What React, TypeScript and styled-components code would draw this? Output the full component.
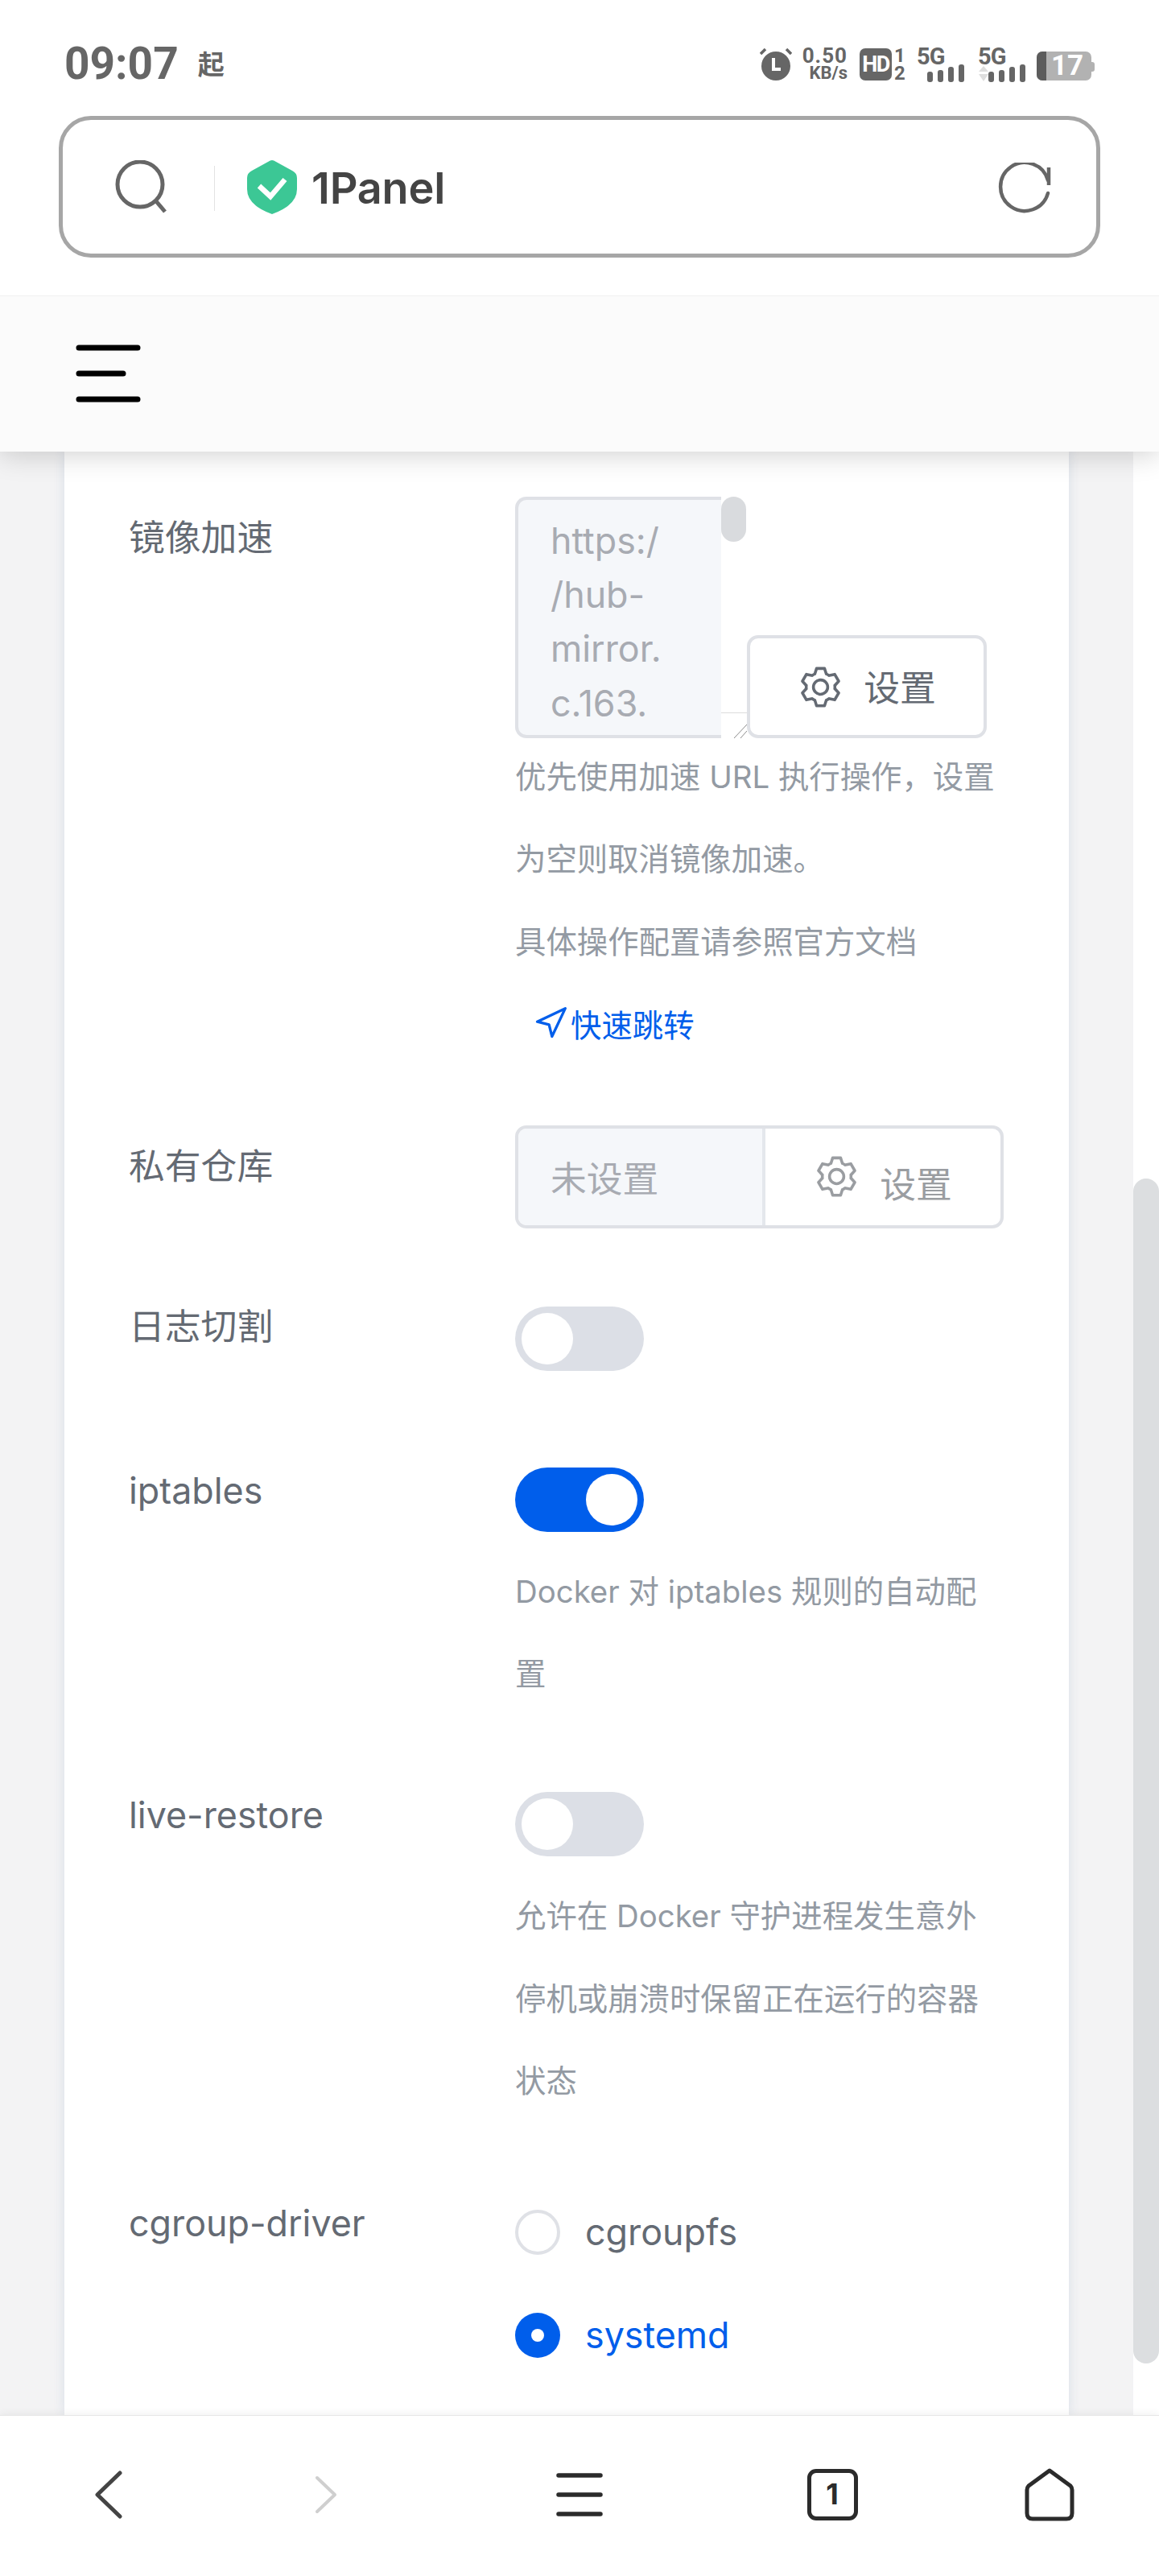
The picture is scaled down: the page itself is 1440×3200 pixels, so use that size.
import React from "react";
import styled, { createGlobalStyle } from "styled-components";
import { Navigation } from "lucide-react";

const Global = createGlobalStyle`
  html, body { margin: 0; padding: 0; background: #fff; }
  * { box-sizing: border-box; }
  body { font-family: Inter, "Noto Sans CJK SC", sans-serif; }
`;

const Page = styled.div`
  width: 1440px;
  height: 3200px;
  display: flex;
  flex-direction: column;
  overflow: hidden;
  background: #fff;
`;

const StatusBar = styled.div`
  height: 144px;
  padding: 60px 84px 0 80px;
  display: flex;
  justify-content: space-between;
  align-items: flex-start;
  color: #666;
  font-family: Roboto, "Noto Sans CJK SC", sans-serif;
  font-weight: 700;
`;
const TimeGroup = styled.div`
  display: flex;
  align-items: center;
  gap: 24px;
  height: 38px;
`;
const Time = styled.span`
  font-size: 55px;
  line-height: 38px;
`;
const Carrier = styled.span`
  font-size: 33px;
  line-height: 38px;
  margin-top: 4px;
`;
const StatusRight = styled.div`
  display: flex;
  align-items: flex-start;
`;
const Speed = styled.div`
  width: 56px;
  margin: 0 15px 0 13px;
  display: flex;
  flex-direction: column;
  align-items: flex-end;
  gap: 5px;
`;
const SpeedValue = styled.span`
  font-size: 26px;
  line-height: 18px;
  white-space: nowrap;
  letter-spacing: 1px;
`;
const SpeedUnit = styled.span`
  font-size: 22px;
  line-height: 16px;
  white-space: nowrap;
`;
const HdBadge = styled.div`
  width: 40px;
  height: 40px;
  background: #666;
  border-radius: 7px;
  color: #fff;
  font-size: 27px;
  line-height: 40px;
  text-align: center;
  letter-spacing: -1.6px;
`;
const SimStack = styled.div`
  width: 16px;
  margin: 0 13px 0 2px;
  display: flex;
  flex-direction: column;
  align-items: center;
  gap: 4px;
  font-size: 24px;
  line-height: 18px;
`;
const NetGroup = styled.div<{ $gap: number }>`
  width: 59px;
  margin-right: ${(p) => p.$gap}px;
  display: flex;
  flex-direction: column;
  align-items: flex-start;
`;
const NetLabel = styled.span`
  font-size: 29px;
  line-height: 20px;
  height: 18px;
  letter-spacing: -1px;
`;
const Battery = styled.div`
  position: relative;
  width: 68px;
  height: 36px;
  margin-top: 4px;
  border-radius: 7px;
  background: #b2b2b2;
  display: flex;
  &::after {
    content: "";
    position: absolute;
    right: -4px;
    top: 13px;
    width: 4px;
    height: 12px;
    border-radius: 0 3px 3px 0;
    background: #b2b2b2;
  }
`;
const BatteryFill = styled.div`
  width: 12px;
  border-radius: 7px 0 0 7px;
  background: #5c5c5c;
`;
const BatteryText = styled.span`
  flex: 1;
  color: #fff;
  font-size: 35px;
  line-height: 36px;
  text-align: center;
  padding-right: 4px;
`;

const AddressWrap = styled.div`
  height: 223px;
  padding: 0 73px;
`;
const AddressBar = styled.div`
  height: 176px;
  border: 5px solid #a6a6a6;
  border-radius: 40px;
  padding: 0 56px 0 65px;
  display: flex;
  align-items: center;
`;
const AddressDivider = styled.div`
  width: 1px;
  height: 56px;
  margin: 4px 40px 0 59px;
  background: #e3e3e3;
`;
const SiteName = styled.span`
  margin: 3px 0 0 18px;
  flex: 1;
  font-size: 54px;
  font-weight: 600;
  line-height: 60px;
  color: #444;
  letter-spacing: -0.2px;
`;
const RefreshWrap = styled.div`
  display: flex;
  margin-top: 6px;
`;

const AppHeader = styled.div`
  position: relative;
  z-index: 3;
  height: 194px;
  padding: 58px 0 0 93px;
  background: #fbfbfb;
  border-top: 1px solid #f0f0f0;
  box-shadow: 0 2px 34px rgba(0, 0, 0, 0.2);
  clip-path: inset(0 0 -80px 0);
`;

const Main = styled.div`
  flex: 1;
  min-height: 0;
  display: flex;
  background: #f3f3f4;
  overflow: hidden;
`;
const Gutter = styled.div`
  width: 80px;
  flex: none;
`;
const Card = styled.div`
  width: 1248px;
  flex: none;
  background: #fff;
  padding: 56px 0 0 80px;
  box-shadow: 0 0 14px rgba(30, 80, 150, 0.12);
  display: flex;
  flex-direction: column;
  gap: 71px;
`;
const ScrollTrack = styled.div`
  width: 32px;
  flex: none;
  margin-left: 80px;
  background: #fff;
  position: relative;
  z-index: 1;
`;
const ScrollThumb = styled.div`
  margin-top: 903px;
  height: 1472px;
  background: #dcdee0;
  border-radius: 16px;
`;

const Row = styled.div`
  display: grid;
  grid-template-columns: 480px 607px;
  align-items: start;
`;
const Label = styled.div`
  font-size: 44.8px;
  line-height: 102.4px;
  color: #646a73;
`;
const Control = styled.div<{ $shift?: number }>`
  display: flex;
  flex-direction: column;
  align-items: flex-start;
  margin-top: ${(p) => p.$shift ?? 0}px;
`;

const MirrorRow = styled.div`
  display: flex;
  align-items: flex-end;
`;
const TextareaShell = styled.div`
  width: 288px;
  height: 300px;
  display: flex;
`;
const TextareaBody = styled.div`
  width: 256px;
  height: 300px;
  overflow: hidden;
  padding: 18px 0 0 40px;
  background: #f5f7fa;
  border: 4px solid #dfe1e6;
  border-right: 0;
  border-radius: 14px 0 0 14px;
  color: #a8abb2;
  font-size: 44.8px;
  line-height: 67.2px;
`;
const TextareaSide = styled.div`
  width: 32px;
  display: flex;
  flex-direction: column;
  justify-content: space-between;
`;
const TextareaThumb = styled.div`
  width: 31px;
  height: 56px;
  border-radius: 16px;
  background: #d9dbde;
`;
const Resizer = styled.div`
  height: 32px;
  border-top: 1px solid #dcdcdc;
  display: flex;
  align-items: flex-end;
  justify-content: flex-end;
`;
const SetButton = styled.div`
  width: 298px;
  height: 128px;
  border: 4px solid #dfe1e6;
  border-radius: 14px;
  background: #fff;
  color: #646a73;
  font-size: 44.8px;
  display: flex;
  align-items: center;
  justify-content: center;
  gap: 25px;
`;
const ButtonText = styled.span`
  margin-top: -3px;
`;
const Help = styled.div`
  width: 600px;
  font-size: 38.4px;
  line-height: 102.4px;
  color: #939aa3;
`;
const MirrorHelp = styled(Help)`
  margin-top: -3px;
`;
const JumpLink = styled.div`
  height: 102.4px;
  margin: -1px 0 4px;
  padding-left: 22px;
  display: flex;
  align-items: center;
  gap: 3px;
  font-size: 38.4px;
  color: #005eeb;
`;

const InputGroup = styled.div`
  width: 607px;
  height: 128px;
  display: flex;
  border: 4px solid #dfe1e6;
  border-radius: 14px;
  overflow: hidden;
`;
const InputField = styled.div`
  width: 303px;
  background: #f5f7fa;
  padding-left: 40px;
  display: flex;
  align-items: center;
  font-size: 44.8px;
  color: #a8abb2;
`;
const InputAppend = styled.div`
  flex: 1;
  border-left: 4px solid #e4e7ec;
  display: flex;
  align-items: center;
  justify-content: center;
  gap: 25px;
  color: #9a9da1;
  font-size: 44.8px;
`;
const LoweredText = styled.span`
  margin-top: 14px;
`;

const SwitchBox = styled.div<{ $top: number }>`
  padding-top: ${(p) => p.$top}px;
  padding-bottom: ${(p) => 53 - p.$top}px;
`;
const Track = styled.div<{ $on?: boolean }>`
  width: 160px;
  height: 80px;
  border-radius: 40px;
  padding: 8px;
  display: flex;
  justify-content: ${(p) => (p.$on ? "flex-end" : "flex-start")};
  background: ${(p) => (p.$on ? "#005eeb" : "#dcdfe6")};
`;
const Knob = styled.div`
  width: 64px;
  height: 64px;
  border-radius: 50%;
  background: #fff;
`;
const HelpBelow = styled(Help)`
  margin: -8px 0 3px;
`;

const RadioRow = styled.div`
  height: 128px;
  display: flex;
  align-items: center;
  gap: 31px;
`;
const RadioDot = styled.div<{ $on?: boolean }>`
  width: 56px;
  height: 56px;
  border-radius: 50%;
  display: flex;
  align-items: center;
  justify-content: center;
  background: ${(p) => (p.$on ? "#005eeb" : "#fff")};
  border: ${(p) => (p.$on ? "0" : "4px solid #dfe1e6")};
  &::after {
    content: "";
    display: ${(p) => (p.$on ? "block" : "none")};
    width: 16px;
    height: 16px;
    border-radius: 50%;
    background: #fff;
  }
`;
const RadioText = styled.span<{ $on?: boolean }>`
  font-size: 44.8px;
  color: ${(p) => (p.$on ? "#005eeb" : "#646a73")};
`;

const BottomNav = styled.div`
  position: relative;
  z-index: 3;
  height: 200px;
  background: #fff;
  border-top: 1px solid #e6e6e6;
  box-shadow: 0 -2px 10px rgba(0, 0, 0, 0.05);
  display: grid;
  grid-template-columns: 270px 270px 360px 268px 272px;
  align-items: center;
  justify-items: center;
`;
const TabBox = styled.div`
  width: 63px;
  height: 64px;
  margin-top: -3px;
  border: 5px solid #2b2b2b;
  border-radius: 11px;
  color: #2b2b2b;
  font-size: 36px;
  font-weight: 700;
  line-height: 53px;
  text-align: center;
`;
const NavIcon = styled.svg`
  display: block;
  margin-top: -3px;
`;

const Alarm = () => (
  <svg width="40" height="40" viewBox="0 0 40 40" aria-hidden>
    <circle cx="20" cy="22" r="18" fill="#666" />
    <path d="M1 7 L7 1 M39 7 L33 1" stroke="#666" strokeWidth="3.5" />
    <path d="M17 12 V26 H26" fill="none" stroke="#fff" strokeWidth="4" />
  </svg>
);

const Signal = ({ arrows }: { arrows?: boolean }) => (
  <svg width="59" height="24" viewBox="0 0 59 24" aria-hidden>
    {arrows && <path d="M7 4 L13 11 H1 Z M7 23 L1 14 H13 Z" fill="#dedede" />}
    <rect x="13" y="11" width="7" height="13" rx="3" fill="#666" />
    <rect x="26" y="9" width="7" height="15" rx="3" fill="#666" />
    <rect x="39" y="5" width="7" height="19" rx="3" fill="#666" />
    <rect x="52" y="2" width="7" height="22" rx="3" fill="#666" />
  </svg>
);

const SearchIcon = () => (
  <svg width="64" height="66" viewBox="0 0 64 66" aria-hidden>
    <circle cx="31" cy="30" r="28" fill="none" stroke="#666" strokeWidth="5" />
    <path d="M51 51 L62 64" stroke="#666" strokeWidth="5" />
  </svg>
);

const Shield = () => (
  <svg width="62" height="67" viewBox="0 0 62 67" aria-hidden>
    <path
      d="M31 0 Q33 0 36 2 L56 13 Q62 16 62 22 V36 Q62 56 31 67 Q0 56 0 36 V22 Q0 16 6 13 L26 2 Q29 0 31 0Z"
      fill="#3cc795"
    />
    <path d="M15 32 L29 45 L47 24" fill="none" stroke="#fff" strokeWidth="6.5" />
  </svg>
);

const RefreshIcon = () => (
  <svg width="66" height="66" viewBox="0 0 66 66" aria-hidden>
    <path
      d="M62 38 A30 30 0 1 1 62 22"
      fill="none"
      stroke="#666"
      strokeWidth="4.5"
      strokeLinecap="round"
    />
    <path d="M63 6 V28" stroke="#666" strokeWidth="4.5" />
  </svg>
);

const Hamburger = () => (
  <svg width="84" height="74" viewBox="0 0 84 74" aria-hidden>
    <path
      d="M5 6 H78 M5 38 H60 M5 70 H78"
      stroke="#000"
      strokeWidth="7"
      strokeLinecap="round"
    />
  </svg>
);

const Hatch = () => (
  <svg width="16" height="17" viewBox="0 0 16 17" aria-hidden>
    <path d="M0 17 L16 0 M8 17 L16 8" stroke="#8c8c8c" strokeWidth="1" />
  </svg>
);

const Gear = () => (
  <svg width="57" height="57" viewBox="0 0 1024 1024" fill="currentColor" aria-hidden>
    <path d="M600.704 64a32 32 0 0 1 30.464 22.208l35.2 109.376c14.784 7.232 28.928 15.36 42.432 24.512l112.384-24.192a32 32 0 0 1 34.432 15.36L944.32 364.8a32 32 0 0 1-4.032 37.504l-77.12 85.12a357.12 357.12 0 0 1 0 49.024l77.12 85.248a32 32 0 0 1 4.032 37.504l-88.704 153.6a32 32 0 0 1-34.432 15.296L708.8 803.904c-13.44 9.088-27.648 17.28-42.368 24.512l-35.264 109.376A32 32 0 0 1 600.704 960H423.296a32 32 0 0 1-30.464-22.208L357.696 828.48a351.616 351.616 0 0 1-42.56-24.64l-112.32 24.256a32 32 0 0 1-34.432-15.36L79.68 659.2a32 32 0 0 1 4.032-37.504l77.12-85.248a357.12 357.12 0 0 1 0-48.896l-77.12-85.248A32 32 0 0 1 79.68 364.8l88.704-153.6a32 32 0 0 1 34.432-15.296l112.32 24.256c13.568-9.152 27.776-17.408 42.56-24.64l35.2-109.312A32 32 0 0 1 423.232 64H600.64zm-23.424 64H446.72l-36.352 113.088-24.512 11.968a294.113 294.113 0 0 0-34.816 20.096l-22.656 15.36-116.224-25.088-65.28 113.152 79.68 88.192-1.92 27.136a293.12 293.12 0 0 0 0 40.192l1.92 27.136-79.808 88.192 65.344 113.152 116.224-25.024 22.656 15.296a294.113 294.113 0 0 0 34.816 20.096l24.512 11.968L446.72 896h130.688l36.48-113.152 24.448-11.904a288.282 288.282 0 0 0 34.752-20.096l22.592-15.296 116.288 25.024 65.28-113.152-79.744-88.192 1.92-27.136a293.12 293.12 0 0 0 0-40.256l-1.92-27.136 79.808-88.128-65.344-113.152-116.288 24.96-22.592-15.232a287.616 287.616 0 0 0-34.752-20.096l-24.448-11.904L577.344 128zM512 320a192 192 0 1 1 0 384 192 192 0 0 1 0-384zm0 64a128 128 0 1 0 0 256 128 128 0 0 0 0-256z" />
  </svg>
);

export default function App() {
  return (
    <Page lang="zh-CN">
      <Global />
      <StatusBar>
        <TimeGroup>
          <Time>09:07</Time>
          <Carrier>起</Carrier>
        </TimeGroup>
        <StatusRight>
          <Alarm />
          <Speed>
            <SpeedValue>0.50</SpeedValue>
            <SpeedUnit>KB/s</SpeedUnit>
          </Speed>
          <HdBadge>HD</HdBadge>
          <SimStack>
            <span>1</span>
            <span>2</span>
          </SimStack>
          <NetGroup $gap={17}>
            <NetLabel>5G</NetLabel>
            <Signal />
          </NetGroup>
          <NetGroup $gap={14}>
            <NetLabel>5G</NetLabel>
            <Signal arrows />
          </NetGroup>
          <Battery>
            <BatteryFill />
            <BatteryText>17</BatteryText>
          </Battery>
        </StatusRight>
      </StatusBar>

      <AddressWrap>
        <AddressBar>
          <SearchIcon />
          <AddressDivider />
          <Shield />
          <SiteName>1Panel</SiteName>
          <RefreshWrap>
            <RefreshIcon />
          </RefreshWrap>
        </AddressBar>
      </AddressWrap>

      <AppHeader>
        <Hamburger />
      </AppHeader>

      <Main>
        <Gutter />
        <Card>
          <Row>
            <Label>镜像加速</Label>
            <Control>
              <MirrorRow>
                <TextareaShell>
                  <TextareaBody>
                    https:/
                    <br />
                    /hub-
                    <br />
                    mirror.
                    <br />
                    c.163.
                  </TextareaBody>
                  <TextareaSide>
                    <TextareaThumb />
                    <Resizer>
                      <Hatch />
                    </Resizer>
                  </TextareaSide>
                </TextareaShell>
                <SetButton>
                  <Gear />
                  <ButtonText>设置</ButtonText>
                </SetButton>
              </MirrorRow>
              <MirrorHelp>
                优先使用加速 URL 执行操作，设置为空则取消镜像加速。
                <br />
                具体操作配置请参照官方文档
              </MirrorHelp>
              <JumpLink>
                <Navigation size={44} strokeWidth={1.8} />
                <span>快速跳转</span>
              </JumpLink>
            </Control>
          </Row>

          <Row>
            <Label>私有仓库</Label>
            <InputGroup>
              <InputField>未设置</InputField>
              <InputAppend>
                <Gear />
                <LoweredText>设置</LoweredText>
              </InputAppend>
            </InputGroup>
          </Row>

          <Row>
            <Label>日志切割</Label>
            <SwitchBox $top={26}>
              <Track>
                <Knob />
              </Track>
            </SwitchBox>
          </Row>

          <Row>
            <Label>iptables</Label>
            <Control>
              <SwitchBox $top={22}>
                <Track $on>
                  <Knob />
                </Track>
              </SwitchBox>
              <HelpBelow>Docker 对 iptables 规则的自动配置</HelpBelow>
            </Control>
          </Row>

          <Row>
            <Label>live-restore</Label>
            <Control>
              <SwitchBox $top={22}>
                <Track>
                  <Knob />
                </Track>
              </SwitchBox>
              <HelpBelow>
                允许在 Docker 守护进程发生意外停机或崩溃时保留正在运行的容器状态
              </HelpBelow>
            </Control>
          </Row>

          <Row>
            <Label>cgroup-driver</Label>
            <Control $shift={-2}>
              <RadioRow>
                <RadioDot />
                <RadioText>cgroupfs</RadioText>
              </RadioRow>
              <RadioRow>
                <RadioDot $on />
                <RadioText $on>systemd</RadioText>
              </RadioRow>
            </Control>
          </Row>
        </Card>
        <ScrollTrack>
          <ScrollThumb />
        </ScrollTrack>
      </Main>

      <BottomNav>
        <NavIcon width="34" height="60" viewBox="0 0 34 60" aria-hidden>
          <path d="M31 3 L3 30 L31 57" fill="none" stroke="#444" strokeWidth="5" strokeLinecap="round" strokeLinejoin="round" />
        </NavIcon>
        <NavIcon width="28" height="48" viewBox="0 0 28 48" aria-hidden>
          <path d="M3 3 L25 24 L3 45" fill="none" stroke="#cfcfcf" strokeWidth="4" strokeLinecap="round" strokeLinejoin="round" />
        </NavIcon>
        <NavIcon width="58" height="56" viewBox="0 0 58 56" aria-hidden>
          <path d="M3 4 H55 M3 28 H55 M3 52 H55" stroke="#2b2b2b" strokeWidth="5.5" strokeLinecap="round" />
        </NavIcon>
        <TabBox>1</TabBox>
        <NavIcon width="62" height="66" viewBox="0 0 62 66" aria-hidden>
          <path
            d="M31 3 L57 22 Q59 24 59 27 V56 Q59 63 52 63 H10 Q3 63 3 56 V27 Q3 24 5 22 Z"
            fill="none"
            stroke="#2b2b2b"
            strokeWidth="5"
            strokeLinejoin="round"
          />
        </NavIcon>
      </BottomNav>
    </Page>
  );
}
